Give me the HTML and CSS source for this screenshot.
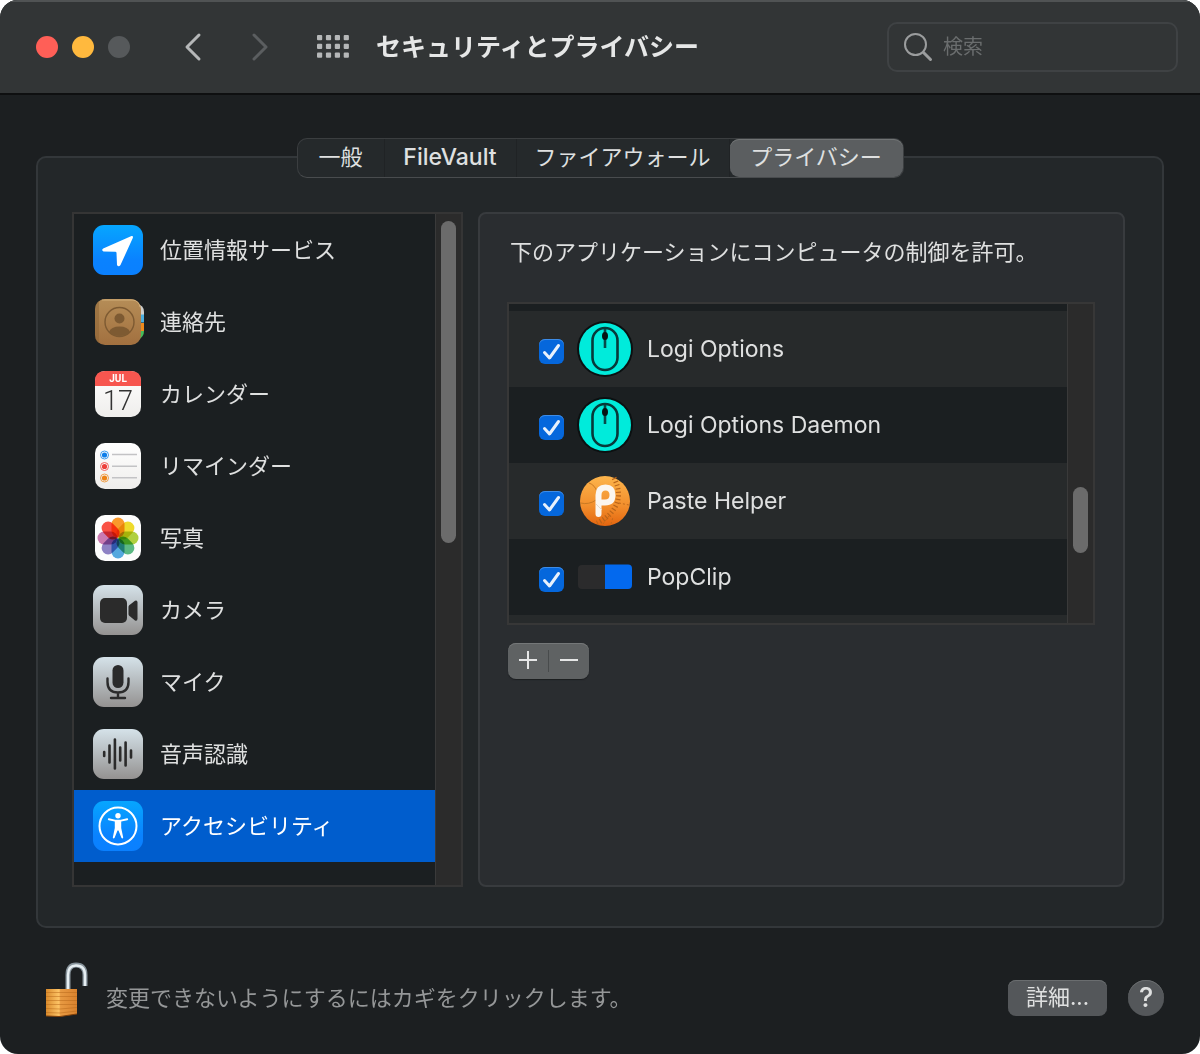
FILE: index.html
```
<!DOCTYPE html>
<html lang="ja">
<head>
    <meta charset="UTF-8">
    <meta name="viewport" content="width=device-width, initial-scale=1.0">
    <title>セキュリティとプライバシー</title>
    <link rel="stylesheet" href="styles.css">
</head>
<body>

<!-- shared gradients and symbols -->
<svg class="defs" width="0" height="0" aria-hidden="true">
    <defs>
        <linearGradient id="blue" x1="0" y1="0" x2="0" y2="1">
            <stop offset="0" stop-color="#06a6ff"/><stop offset="0.7" stop-color="#0a82ff"/><stop offset="1" stop-color="#0a80ff"/>
        </linearGradient>
        <linearGradient id="silver" x1="0" y1="0" x2="0" y2="1">
            <stop offset="0" stop-color="#d5e2e9"/><stop offset="1" stop-color="#949291"/>
        </linearGradient>
        <linearGradient id="paper" x1="0" y1="0" x2="0" y2="1">
            <stop offset="0" stop-color="#ffffff"/><stop offset="1" stop-color="#efeeec"/>
        </linearGradient>
        <linearGradient id="leather" x1="0" y1="0" x2="0" y2="1">
            <stop offset="0" stop-color="#b58d57"/><stop offset="1" stop-color="#a2703f"/>
        </linearGradient>
        <linearGradient id="orange" x1="0" y1="0" x2="0" y2="1">
            <stop offset="0" stop-color="#fdb54c"/><stop offset="0.6" stop-color="#f28e2c"/><stop offset="1" stop-color="#e3650f"/>
        </linearGradient>
        <linearGradient id="brass" x1="0" y1="0" x2="1" y2="0">
            <stop offset="0" stop-color="#d98a2c"/><stop offset="0.42" stop-color="#fdc466"/><stop offset="0.47" stop-color="#e89a42"/><stop offset="1" stop-color="#d9822e"/>
        </linearGradient>
    </defs>
    <symbol id="tick" viewBox="0 0 25 25">
        <path d="M5.5 13.5 L10.5 19 L19.5 6.5" fill="none" stroke="#e8f1fc" stroke-width="3" stroke-linecap="round" stroke-linejoin="round"/>
    </symbol>
    <symbol id="mouse" viewBox="0 0 56 56">
        <circle cx="28" cy="28" r="28" fill="#0b1011"/>
        <circle cx="28" cy="28" r="26" fill="#00ebdb"/>
        <rect x="15.500" y="7" width="25" height="42" rx="12.500" fill="none" stroke="#07393a" stroke-width="2.600"/>
        <path d="M28 8 V27" stroke="#07494a" stroke-width="2.600"/>
        <ellipse cx="28" cy="15" rx="3" ry="4" fill="#061414"/>
    </symbol>
</svg>

<div class="window">
    <header class="toolbar">
        <div class="lights">
            <button class="light close" aria-label="閉じる"></button>
            <button class="light minimize" aria-label="しまう"></button>
            <button class="light zoom" aria-label="拡大" disabled></button>
        </div>
        <button class="nav back" aria-label="戻る">
            <svg width="22" height="28" viewBox="0 0 22 28"><path d="M17 2 L5 14 L17 26"/></svg>
        </button>
        <button class="nav forward" aria-label="進む" disabled>
            <svg width="22" height="28" viewBox="0 0 22 28"><path d="M5 2 L17 14 L5 26"/></svg>
        </button>
        <button class="show-all" aria-label="すべてを表示">
            <svg width="32" height="24" viewBox="0 0 32 24" fill="#b5b7b8">
                <rect x="0" y="0" width="5.200" height="5.200" rx="1"/><rect x="8.900" y="0" width="5.200" height="5.200" rx="1"/><rect x="17.800" y="0" width="5.200" height="5.200" rx="1"/><rect x="26.700" y="0" width="5.200" height="5.200" rx="1"/>
                <rect x="0" y="8.800" width="5.200" height="5.200" rx="1"/><rect x="8.900" y="8.800" width="5.200" height="5.200" rx="1"/><rect x="17.800" y="8.800" width="5.200" height="5.200" rx="1"/><rect x="26.700" y="8.800" width="5.200" height="5.200" rx="1"/>
                <rect x="0" y="17.600" width="5.200" height="5.200" rx="1"/><rect x="8.900" y="17.600" width="5.200" height="5.200" rx="1"/><rect x="17.800" y="17.600" width="5.200" height="5.200" rx="1"/><rect x="26.700" y="17.600" width="5.200" height="5.200" rx="1"/>
            </svg>
        </button>
        <h1>セキュリティとプライバシー</h1>
        <label class="search">
            <svg width="28" height="28" viewBox="0 0 28 28" fill="none" stroke="#9b9d9e" stroke-linecap="round">
                <circle cx="11.500" cy="11.500" r="10.500" stroke-width="2"/>
                <path d="M19.500 19.500 L26.500 26.500" stroke-width="3"/>
            </svg>
            <input type="search" placeholder="検索" aria-label="検索">
        </label>
    </header>

    <main>
        <nav class="tabs">
            <button class="tab-general">一般</button>
            <button class="tab-filevault">FileVault</button>
            <button class="tab-firewall">ファイアウォール</button>
            <button class="tab-privacy active">プライバシー</button>
        </nav>

        <div class="panel">
            <div class="services">
                <ul>
                    <li><button>
                        <svg width="50" height="50" viewBox="0 0 50 50">
                            <rect width="50" height="50" rx="11" fill="url(#blue)"/>
                            <path d="M38.500 11 Q40.500 10.500 39.800 13 L27.500 40 Q25.500 42.500 24 40 L23.500 27.800 Q23.300 26.800 22.300 26.800 L10.500 26.500 Q8 25 10.200 23.500 Z" fill="#fff"/>
                        </svg>
                        位置情報サービス
                    </button></li>
                    <li><button>
                        <svg width="50" height="50" viewBox="0 0 50 50">
                            <path d="M44 7 Q51 8 51 15 V18 H44 Z" fill="#cfcfcd"/>
                            <rect x="44" y="17.500" width="7" height="8" fill="#4dafe0"/>
                            <rect x="44" y="26" width="7" height="8" fill="#ee8a1d"/>
                            <path d="M44 34 H51 Q51 40 45 43 Z" fill="#45bd5a"/>
                            <rect x="2" y="2" width="46" height="46" rx="10" fill="url(#leather)"/>
                            <path d="M6 4 Q2 7 2 12 V38 Q2 44 6 46 Z" fill="#8c6335" opacity="0.500"/>
                            <path d="M9 3 H40 Q46 4 47 10" fill="none" stroke="#d2ad78" stroke-width="1"/>
                            <circle cx="26.500" cy="25" r="14.500" fill="none" stroke="#7d5a32" stroke-width="1.400"/>
                            <circle cx="26.500" cy="21.500" r="5" fill="#7d5a32"/>
                            <path d="M16 35 Q18 29.500 26.500 29.500 Q35 29.500 37 35 Q33 39 26.500 39 Q20 39 16 35 Z" fill="#7d5a32"/>
                        </svg>
                        連絡先
                    </button></li>
                    <li><button>
                        <svg width="50" height="50" viewBox="0 0 50 50">
                            <rect x="2" y="2" width="46" height="46" rx="10" fill="url(#paper)"/>
                            <path d="M2 17 V12 Q2 2 12 2 H38 Q48 2 48 12 V17 Z" fill="#f7564f"/>
                            <text class="cal-month" x="25" y="13" text-anchor="middle">JUL</text>
                            <text class="cal-day" x="25" y="41" text-anchor="middle">17</text>
                        </svg>
                        カレンダー
                    </button></li>
                    <li><button>
                        <svg width="50" height="50" viewBox="0 0 50 50">
                            <rect x="2" y="2" width="46" height="46" rx="10" fill="url(#paper)"/>
                            <g fill="none" stroke-width="1">
                                <circle cx="11.500" cy="14" r="4" stroke="#3b9cf0"/><circle cx="11.500" cy="25.500" r="4" stroke="#f4655f"/><circle cx="11.500" cy="37" r="4" stroke="#f0a04b"/>
                            </g>
                            <circle cx="11.500" cy="14" r="2.600" fill="#0f7fea"/><circle cx="11.500" cy="25.500" r="2.600" fill="#ed3f3a"/><circle cx="11.500" cy="37" r="2.600" fill="#ec8416"/>
                            <path d="M19 13.500 H44 M19 25.200 H44 M19 36.800 H44" stroke="#c3c3c5" stroke-width="1.600"/>
                        </svg>
                        リマインダー
                    </button></li>
                    <li><button>
                        <svg width="50" height="50" viewBox="0 0 50 50">
                            <rect x="2" y="2" width="46" height="46" rx="10" fill="#fdfdfd"/>
                            <g class="petals">
                                <rect x="18.500" y="4.500" width="13" height="20" rx="6.500" fill="#fb9a2b"/>
                                <rect x="18.500" y="4.500" width="13" height="20" rx="6.500" fill="#f0dc2c" transform="rotate(45 25 25)"/>
                                <rect x="18.500" y="4.500" width="13" height="20" rx="6.500" fill="#b2d23f" transform="rotate(90 25 25)"/>
                                <rect x="18.500" y="4.500" width="13" height="20" rx="6.500" fill="#5cbb84" transform="rotate(135 25 25)"/>
                                <rect x="18.500" y="4.500" width="13" height="20" rx="6.500" fill="#55a9e0" transform="rotate(180 25 25)"/>
                                <rect x="18.500" y="4.500" width="13" height="20" rx="6.500" fill="#8f83c6" transform="rotate(225 25 25)"/>
                                <rect x="18.500" y="4.500" width="13" height="20" rx="6.500" fill="#cc7cb4" transform="rotate(270 25 25)"/>
                                <rect x="18.500" y="4.500" width="13" height="20" rx="6.500" fill="#fb5145" transform="rotate(315 25 25)"/>
                            </g>
                        </svg>
                        写真
                    </button></li>
                    <li><button>
                        <svg width="50" height="50" viewBox="0 0 50 50">
                            <rect width="50" height="50" rx="11" fill="url(#silver)"/>
                            <rect x="7" y="13" width="27" height="25" rx="5" fill="#2b2b2b"/>
                            <path d="M35.500 22 Q35.500 21 36.200 20.300 L42 15.800 Q44.500 15 44.500 17.500 V33.500 Q44.500 36.500 42 35.500 L36.200 30.800 Q35.500 30 35.500 29 Z" fill="#2b2b2b"/>
                        </svg>
                        カメラ
                    </button></li>
                    <li><button>
                        <svg width="50" height="50" viewBox="0 0 50 50">
                            <rect width="50" height="50" rx="11" fill="url(#silver)"/>
                            <rect x="19.500" y="8" width="11" height="23" rx="5.500" fill="#2b2b2b"/>
                            <path d="M14.500 21.500 V25 Q14.500 35.500 25 35.500 Q35.500 35.500 35.500 25 V21.500 M25 36 V41 M18 41 H32" fill="none" stroke="#2b2b2b" stroke-width="2.400" stroke-linecap="round"/>
                        </svg>
                        マイク
                    </button></li>
                    <li><button>
                        <svg width="50" height="50" viewBox="0 0 50 50">
                            <rect width="50" height="50" rx="11" fill="url(#silver)"/>
                            <path d="M11.200 23 V27 M16.500 16.500 V33.500 M21.900 10.500 V39.500 M27.200 18.500 V31.500 M32.600 13.500 V36.500 M38 21.500 V28.500" fill="none" stroke="#2b2b2b" stroke-width="2.600" stroke-linecap="round"/>
                        </svg>
                        音声認識
                    </button></li>
                    <li><button class="selected">
                        <svg width="50" height="50" viewBox="0 0 50 50">
                            <rect width="50" height="50" rx="11" fill="url(#blue)"/>
                            <circle cx="25" cy="25" r="18.500" fill="none" stroke="#fff" stroke-width="2"/>
                            <circle cx="25" cy="14.800" r="2.700" fill="#fff"/>
                            <path d="M15.800 18.300 L22 19.600 H28 L34.200 18.300" fill="none" stroke="#fff" stroke-width="1.900" stroke-linecap="round" stroke-linejoin="round"/>
                            <path d="M21.800 19.500 H28.200 V27 L30.200 36.500 Q29.800 38 28.500 37 L25.500 29.500 H24.500 L21.500 37 Q20.200 38 19.800 36.500 L21.800 27 Z" fill="#fff"/>
                        </svg>
                        アクセシビリティ
                    </button></li>
                </ul>
                <div class="track"><div class="thumb thumb-services"></div></div>
            </div>

            <section class="detail">
                <p>下のアプリケーションにコンピュータの制御を許可。</p>
                <div class="apps">
                    <div class="app-rows">
                        <label class="app">
                            <span class="check"><input type="checkbox" checked><svg width="25" height="25"><use href="#tick"/></svg></span>
                            <svg width="56" height="56"><use href="#mouse"/></svg>
                            Logi Options
                        </label>
                        <label class="app">
                            <span class="check"><input type="checkbox" checked><svg width="25" height="25"><use href="#tick"/></svg></span>
                            <svg width="56" height="56"><use href="#mouse"/></svg>
                            Logi Options Daemon
                        </label>
                        <label class="app">
                            <span class="check"><input type="checkbox" checked><svg width="25" height="25"><use href="#tick"/></svg></span>
                            <svg width="56" height="56" viewBox="0 0 56 56">
                                <circle cx="28" cy="28" r="25" fill="url(#orange)"/>
                                <path d="M12 10 Q18 12 20 19 M3.500 30 Q12 32 19 27" fill="none" stroke="#c87a24" stroke-width="1"/>
                                <path d="M37 5 Q46 22 37 36 Q31 45 20 50" fill="none" stroke="#b9651a" stroke-width="5" stroke-dasharray="1.200 2.400"/>
                                <path d="M42 30 L52 32 M26 51 L32 43 M34 51 L36 44" fill="none" stroke="#c06a1c" stroke-width="1" stroke-dasharray="2 2"/>
                                <path d="M21.500 41 V22 Q21.500 14.500 28.500 14.500 Q35.500 14.500 35.500 22 Q35.500 29.500 28 29.500 H23" fill="none" stroke="#fbf6f0" stroke-width="6" stroke-linecap="round" stroke-linejoin="round"/>
                                <path d="M19 31 L25 37" stroke="#e3d8cb" stroke-width="1"/>
                            </svg>
                            Paste Helper
                        </label>
                        <label class="app">
                            <span class="check"><input type="checkbox" checked><svg width="25" height="25"><use href="#tick"/></svg></span>
                            <svg width="56" height="56" viewBox="0 0 56 56">
                                <path d="M28 16 H5 Q1 16 1 20 V36 Q1 40 5 40 H28 Z" fill="#2b2b2c"/>
                                <path d="M28 15.500 H51 Q55 15.500 55 19.500 V36 Q55 40 51 40 H28 Z" fill="#0369ee"/>
                            </svg>
                            PopClip
                        </label>
                    </div>
                    <div class="track"><div class="thumb thumb-apps"></div></div>
                </div>
                <div class="add-remove">
                    <button aria-label="追加"><svg width="20" height="20" viewBox="0 0 20 20"><path d="M1 9 H19 M10 0 V18"/></svg></button>
                    <button aria-label="削除"><svg width="20" height="20" viewBox="0 0 20 20"><path d="M1 9 H19"/></svg></button>
                </div>
            </section>
        </div>
    </main>

    <footer>
        <button class="lock" aria-label="カギ">
            <svg width="44" height="56" viewBox="0 0 44 56">
                <g fill="none">
                    <path d="M24 27 V13 Q24 3 32 3 Q41 3 41 13 V24" stroke="#87939b" stroke-width="5"/>
                    <path d="M24 27 V13 Q24 3.500 32 3.500 Q41 3.500 41 13 V24" stroke="#e6eef2" stroke-width="2.400"/>
                </g>
                <path d="M2 27 H33 V52 L17 54.500 L2 54 Z" fill="url(#brass)"/>
                <path d="M2 30.500 H33 M2 34.500 H33 M2 38.500 H33 M2 42.500 H33 M2 46.500 L16 47 L33 45.500 M2 50.500 L16 51 L33 49" fill="none" stroke="#b5671a" stroke-width="1" opacity="0.500"/>
                <path d="M2 54 L16 54.500 L33 52" fill="none" stroke="#7c3e0a" stroke-width="1"/>
            </svg>
        </button>
        <span class="lock-text">変更できないようにするにはカギをクリックします。</span>
        <button class="advanced">詳細...</button>
        <button class="help" aria-label="ヘルプ">?</button>
    </footer>
</div>

</body>
</html>
```
FILE: styles.css
```
* {
    box-sizing: border-box;
}
body {
    margin: 0;
    background-color: white;
    color: #dfe0e0;
    font-family: Inter, 'Noto Sans CJK JP', sans-serif;
    font-size: 22px;
    line-height: 30px;
}
button, input {
    font: inherit;
    color: inherit;
}
button {
    margin: 0;
    padding: 0;
    border: none;
    background: none;
}
svg {
    display: block;
    flex: none;
    overflow: visible;
}
.defs {
    position: absolute;
}
.window {
    display: flex;
    flex-direction: column;
    min-height: 100vh;
    background-color: #1c1f21;
    border-radius: 18px;
    overflow: hidden;
}

/* toolbar */
.toolbar {
    display: flex;
    align-items: center;
    height: 95px;
    padding: 0 22px 0 36px;
    background-color: #323536;
    border-bottom: 2px solid #0e0f10;
    box-shadow: inset 0 2px 0 #505354;
}
.lights {
    display: flex;
    gap: 14px;
}
.light {
    width: 22px;
    height: 22px;
    border-radius: 50%;
}
.close {
    background-color: #ff5f57;
}
.minimize {
    background-color: #ffb93e;
}
.zoom {
    background-color: #56595b;
}
.nav path {
    fill: none;
    stroke: #b5b7b8;
    stroke-width: 3;
    stroke-linecap: round;
    stroke-linejoin: round;
}
.back {
    margin-left: 52px;
}
.forward {
    margin-left: 45px;
}
.nav.forward path {
    stroke: #5b5e60;
}
.show-all {
    margin: 0 27px 0 46px;
}
h1 {
    flex: 1;
    margin: 0;
    font-size: 25px;
    font-weight: bold;
    color: #e6e7e7;
}
.search {
    display: flex;
    align-items: center;
    gap: 11px;
    width: 291px;
    height: 50px;
    padding: 0 15px;
    border: 2px solid #3f4244;
    border-radius: 10px;
}
.search input {
    width: 100%;
    min-width: 0;
    padding: 0;
    border: none;
    outline: none;
    background: none;
    font-size: 20px;
}
.search input::placeholder {
    color: #6a6d6e;
    opacity: 1;
}

/* tabs */
main {
    flex: 1;
    display: flex;
    flex-direction: column;
    padding: 43px 36px 0;
}
.tabs {
    z-index: 1;
    display: flex;
    align-self: center;
    height: 40px;
    margin-bottom: -22px;
    border: 1px solid #3b3e40;
    border-bottom-color: #494c4e;
    border-radius: 10px;
    background-color: #25292b;
}
.tabs button {
    padding-bottom: 3px;
    border-right: 1px solid #202325;
}
.tab-general {
    width: 87px;
}
.tabs .tab-filevault {
    width: 132px;
    font-size: 23px;
    font-weight: 500;
}
.tab-firewall {
    width: 213px;
}
.tabs .tab-privacy {
    width: 173px;
    border: none;
}
.tabs .active {
    border-radius: 9px;
    background-color: #5b5e60;
    box-shadow: inset 0 1px 0 #717475;
}
.panel {
    flex: 1;
    display: flex;
    gap: 15px;
    padding: 54px 37px 39px 34px;
    border: 2px solid #33373a;
    border-radius: 10px;
    background-color: #232729;
}

/* services list */
.services {
    display: flex;
    width: 391px;
    border: 2px solid #353535;
    background-color: #1b1f21;
}
.services ul {
    flex: 1;
    margin: 0;
    padding: 0;
    list-style: none;
}
.services button {
    display: flex;
    align-items: center;
    gap: 17px;
    width: 100%;
    height: 72px;
    padding-left: 19px;
    text-align: left;
}
.services .selected {
    background-color: #005dcd;
    color: white;
}
.cal-month {
    font: bold 10px Roboto, sans-serif;
    fill: white;
}
.cal-day {
    font: 300 27px Roboto, sans-serif;
    fill: #333;
}
.petals rect {
    mix-blend-mode: multiply;
}
.track {
    width: 26px;
    padding: 7px 5px;
    border-left: 1px solid #3a3a3a;
    background-color: #2b2b2b;
}
.thumb {
    width: 15px;
    border-radius: 8px;
    background-color: #6b6b6b;
}
.thumb-services {
    height: 322px;
}
.thumb-apps {
    height: 66px;
    margin-top: 176px;
}

/* detail */
.detail {
    flex: 1;
    min-width: 0;
    padding: 23px 28px 0 27px;
    border: 2px solid #383b3e;
    border-radius: 8px;
    background-color: #2a2d30;
}
.detail p {
    margin: 0 0 35px 3px;
}
.apps {
    display: flex;
    height: 323px;
    border: 2px solid #373737;
    background-color: #1b1f21;
}
.app-rows {
    flex: 1;
    padding-top: 7px;
    overflow: hidden;
    background-image: linear-gradient(#1b1f21 90%, #272a2b 90%);
}
.app {
    display: flex;
    align-items: center;
    height: 76px;
    padding-left: 30px;
    font-size: 23px;
    background-color: #1b1f21;
}
.app:nth-child(odd) {
    background-color: #272a2b;
}
.app > svg {
    margin: 0 14px 0 13px;
}
.check {
    display: grid;
    padding-top: 4px;
}
.check input, .check svg {
    grid-area: 1 / 1;
}
.check input {
    width: 25px;
    height: 25px;
    margin: 0;
    appearance: none;
    border-radius: 6px;
    background-color: #0567dc;
    box-shadow: inset 0 1px 0 #3e8ce6;
}
.check svg {
    pointer-events: none;
}
.add-remove {
    display: inline-flex;
    margin: 18px 0 0 1px;
    padding: 7px 0;
    border-radius: 8px;
    background-color: #5f6263;
    box-shadow: inset 0 1px 0 #747778, 0 1px 1px #1b1e20;
}
.add-remove button {
    display: grid;
    place-items: center;
    width: 40px;
    height: 22px;
}
.add-remove button + button {
    width: 41px;
    border-left: 1px solid #484b4c;
}
.add-remove path {
    stroke: #e6e7e7;
    stroke-width: 2;
}

/* footer */
footer {
    display: flex;
    align-items: center;
    height: 126px;
    padding: 14px 36px 0 44px;
}
.lock {
    margin: 0 18px 16px 0;
}
.lock-text {
    flex: 1;
    color: #959798;
}
.advanced {
    width: 99px;
    height: 36px;
    margin-right: 21px;
    padding-bottom: 2px;
    border-radius: 8px;
    background-color: #54575a;
    box-shadow: inset 0 1px 0 #6a6d6f;
}
.help {
    width: 36px;
    height: 36px;
    border-radius: 50%;
    background-color: #54575a;
    box-shadow: inset 0 1px 0 #6a6d6f;
    font-size: 27px;
    font-weight: 500;
}
```
